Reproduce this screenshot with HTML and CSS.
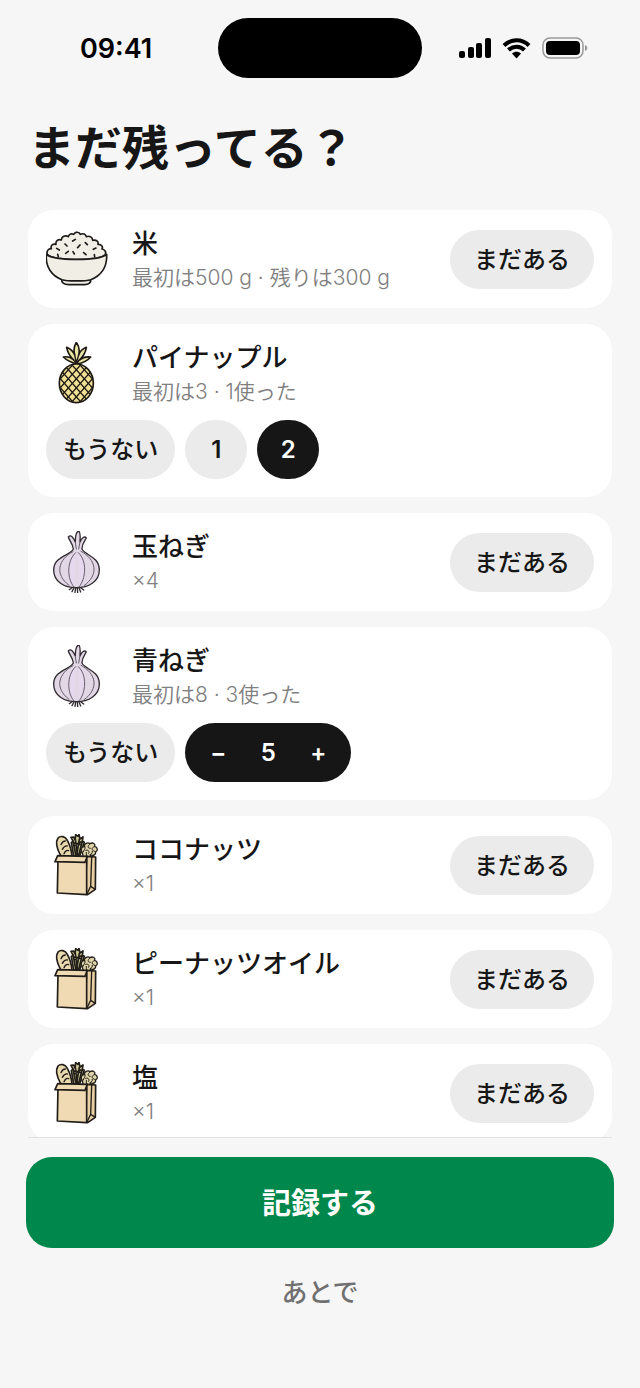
FILE: index.html
```html
<!DOCTYPE html>
<html lang="ja">
<head>
    <meta charset="UTF-8">
    <meta name="viewport" content="width=device-width, initial-scale=1.0">
    <title>まだ残ってる？</title>
    <link rel="stylesheet" href="styles.css">
</head>
<body>
    <!-- Food drawings, reused by the cards below -->
    <svg class="sprite" aria-hidden="true">
        <symbol id="rice" viewBox="30 18 186 186">
            <g stroke="#1c1b19" stroke-width="5" stroke-linecap="round" stroke-linejoin="round">
                <path fill="#f1eee5" d="M34 97C31 88 36 80 46 80C43 71 50 64 60 67C58 57 67 50 76 54C76 44 88 38 97 44C99 35 108 34 113 37C118 28 130 29 133 37C141 33 149 36 151 44C161 40 170 46 170 55C181 52 188 59 186 67C196 66 202 74 198 81C207 83 211 90 208 97C195 118 50 118 34 97Z"/>
                <path fill="#f1eee5" d="M77 170C76 182 83 188 98 188H145C159 188 166 182 164 170Z"/>
                <path fill="#f1eee5" d="M31 97C28 136 48 162 78 173C93 178 149 178 164 173C194 162 214 136 212 97C190 117 54 117 31 97Z"/>
                <path fill="none" d="M110 57l8-5M87 66l6 6M148 62l6 6M62 79l8 5M125 77l7-8M172 82l8-4M89 94l8-6M111 89l4 7M143 92l7 6M65 97l2 7M175 98l1 6"/>
            </g>
        </symbol>
        <symbol id="pineapple" viewBox="30 21 186 186">
            <clipPath id="fruit"><ellipse cx="121" cy="145" rx="51" ry="58"/></clipPath>
            <g stroke="#1d1914" stroke-width="5" stroke-linejoin="round">
                <path fill="#ece6a5" d="M121 87C105 82 91 75 82 66C94 64 105 67 113 75C101 63 94 50 92 37C104 42 112 50 116 60C112 45 114 33 121 22C129 33 132 45 128 60C132 49 141 41 151 37C149 51 142 64 130 75C140 67 151 64 164 66C154 78 140 85 121 87Z"/>
                <path fill="none" stroke-width="4" d="M113 75L121 87L130 75M116 60L121 84L128 60"/>
                <ellipse cx="121" cy="145" rx="51" ry="58" fill="#f1df94"/>
                <g clip-path="url(#fruit)" fill="none" stroke-width="4">
                    <path d="M-17 206L91 84M7 206L115 84M31 206L139 84M55 206L163 84M79 206L187 84M103 206L211 84M127 206L235 84"/>
                    <path d="M7 84L115 206M31 84L139 206M55 84L163 206M79 84L187 206M103 84L211 206M127 84L235 206M-17 84L91 206"/>
                </g>
            </g>
        </symbol>
        <symbol id="onion" viewBox="30 18 186 186">
            <g stroke="#302b31" stroke-width="4" stroke-linecap="round" stroke-linejoin="round">
                <path fill="none" d="M108 188l-8 6M114 189l-6 11M119 189l-2 13M124 189l1 14M129 189l5 12M134 188l9 7"/>
                <path fill="#e1d7e5" d="M112 72C111 57 100 47 97 36C104 28 111 35 118 51C118 35 120 20 128 18C135 23 132 38 132 51C138 38 145 32 151 39C146 48 137 57 138 72C146 91 190 94 190 135C190 170 157 188 121 188C85 188 53 170 53 135C53 94 104 91 112 72Z"/>
                <path fill="#e6d9ee" stroke="#655d6c" stroke-width="3" d="M119 83C91 108 93 163 114 186M127 83C155 108 149 163 129 186"/>
                <path fill="none" stroke="#655d6c" stroke-width="3" d="M111 80C67 103 54 147 99 181M135 79C181 103 190 150 144 182M118 52L121 72M132 51L128 72"/>
            </g>
        </symbol>
        <symbol id="bag" viewBox="31 21 186 186">
            <g stroke="#211d18" stroke-width="5" stroke-linecap="round" stroke-linejoin="round">
                <path fill="#e8d9ae" d="M75 86C64 66 59 45 67 33C75 25 89 28 95 40C102 53 108 70 109 88Z"/>
                <path fill="none" stroke-width="4" d="M76 53C79 46 84 42 89 42M80 67C84 60 89 56 95 57M85 80C88 73 94 69 99 71"/>
                <path fill="#cfc996" stroke-width="5" d="M114 87L107 47L112 42L106 31L114 30L118 38L120 23L127 28L130 22L133 36L142 30L140 43L146 46L132 87Z"/>
                <path fill="none" stroke-width="5" d="M112 43L121 87M119 37L125 83M131 37L123 84M140 43L129 85M117 55L135 45M116 48L133 52"/>
                <path fill="#ded4aa" stroke-width="4" d="M143 89L139 75C134 68 137 59 146 59C145 49 157 45 163 50C172 45 180 51 177 58C187 61 187 72 180 75C181 83 173 87 166 84L160 92Z"/>
                <path fill="none" stroke-width="3" d="M148 59C150 67 144 69 142 76M163 51C155 57 155 64 164 64M176 59C166 62 167 71 179 74M150 70C157 67 163 73 159 79M152 89V76M163 83C168 82 171 77 170 73"/>
                <path fill="#e8d0a4" d="M153 88L180 90L179 187L156 203L149 198Z"/>
                <path fill="#f0dab4" d="M67 98L65 198L153 203V98Z"/>
                <path fill="#f0dab4" d="M66 86L155 88L148 106L58 104Z"/>
                <path fill="none" stroke-width="4" d="M168 91L165 178L154 201M165 178L179 187"/>
            </g>
        </symbol>
    </svg>

    <div class="status-bar">
        <span class="time">09:41</span>
        <div class="island"></div>
        <svg class="status-icons" viewBox="0 0 130 24" aria-hidden="true">
            <rect x="1" y="15" width="6" height="7" rx="2"/>
            <rect x="10" y="11" width="6" height="11" rx="2"/>
            <rect x="18" y="7" width="6" height="15" rx="2"/>
            <rect x="27" y="2" width="6" height="20" rx="2"/>
            <g fill="none" stroke="#000" stroke-width="4">
                <path d="M46 9.500C53 2.500 64 2.500 71 9.500"/>
                <path d="M50.500 14C55 9.500 62 9.500 66.500 14"/>
            </g>
            <path d="M54 17.500C56.500 15 60.500 15 63 17.500L58.500 22.500Z"/>
            <rect x="85" y="2" width="40" height="20" rx="7" fill="none" stroke="#999" stroke-width="1.500"/>
            <rect x="88" y="5" width="34" height="14" rx="4"/>
            <path fill="#999" d="M127 9C130 10 130 14 127 15Z"/>
        </svg>
    </div>

    <h1>まだ残ってる？</h1>

    <main class="list">
        <div class="card">
            <svg class="icon" aria-hidden="true"><use href="#rice"/></svg>
            <div class="info">
                <h2>米</h2>
                <p>最初は500 g · 残りは300 g</p>
            </div>
            <button class="pill">まだある</button>
        </div>

        <div class="card">
            <svg class="icon" aria-hidden="true"><use href="#pineapple"/></svg>
            <div class="info">
                <h2>パイナップル</h2>
                <p>最初は3 · 1使った</p>
            </div>
            <div class="choices">
                <button class="pill none">もうない</button>
                <button class="pill count">1</button>
                <button class="pill count selected">2</button>
            </div>
        </div>

        <div class="card">
            <svg class="icon" aria-hidden="true"><use href="#onion"/></svg>
            <div class="info">
                <h2>玉ねぎ</h2>
                <p>×4</p>
            </div>
            <button class="pill">まだある</button>
        </div>

        <div class="card">
            <svg class="icon" aria-hidden="true"><use href="#onion"/></svg>
            <div class="info">
                <h2>青ねぎ</h2>
                <p>最初は8 · 3使った</p>
            </div>
            <div class="choices">
                <button class="pill none">もうない</button>
                <div class="stepper">
                    <button id="minusBtn">−</button>
                    <output id="amount">5</output>
                    <button id="plusBtn">+</button>
                </div>
            </div>
        </div>

        <div class="card">
            <svg class="icon" aria-hidden="true"><use href="#bag"/></svg>
            <div class="info">
                <h2>ココナッツ</h2>
                <p>×1</p>
            </div>
            <button class="pill">まだある</button>
        </div>

        <div class="card">
            <svg class="icon" aria-hidden="true"><use href="#bag"/></svg>
            <div class="info">
                <h2>ピーナッツオイル</h2>
                <p>×1</p>
            </div>
            <button class="pill">まだある</button>
        </div>

        <div class="card">
            <svg class="icon" aria-hidden="true"><use href="#bag"/></svg>
            <div class="info">
                <h2>塩</h2>
                <p>×1</p>
            </div>
            <button class="pill">まだある</button>
        </div>
    </main>

    <footer>
        <button class="save">記録する</button>
        <button class="later">あとで</button>
    </footer>

    <script>
        // Stepper for the remaining amount
        const amount = document.getElementById('amount');

        document.getElementById('minusBtn').addEventListener('click', function() {
            amount.textContent = Math.max(1, Number(amount.textContent) - 1);
        });

        document.getElementById('plusBtn').addEventListener('click', function() {
            amount.textContent = Math.min(8, Number(amount.textContent) + 1);
        });
    </script>
</body>
</html>
```
FILE: styles.css
```css
* {
    box-sizing: border-box;
}

body {
    display: flex;
    flex-direction: column;
    height: 100vh;
    margin: 0;
    background-color: #f6f6f6;
    color: #161616;
    font-family: Inter, "Noto Sans CJK JP", sans-serif;
}

h1, h2, p {
    margin: 0;
}

button {
    padding: 0;
    border: none;
    background: none;
    color: inherit;
    font-family: inherit;
    cursor: pointer;
}

.sprite {
    position: absolute;
    width: 0;
    height: 0;
}

/* Status bar */
.status-bar {
    display: grid;
    grid-template-columns: 1fr 204px 1fr;
    align-items: center;
    flex-shrink: 0;
    height: 96px;
}

.time {
    padding-left: 80px;
    color: #000;
    font-size: 27px;
    font-weight: 600;
}

.island {
    height: 60px;
    border-radius: 30px;
    background-color: #000;
}

.status-icons {
    justify-self: end;
    width: 130px;
    height: 24px;
    margin-right: 52px;
}

h1 {
    flex-shrink: 0;
    padding: 14px 28px 30px;
    font-family: "Noto Sans CJK JP", sans-serif;
    font-size: 47px;
    font-weight: 700;
    line-height: 70px;
}

/* Food list */
.list {
    display: flex;
    flex: 1;
    flex-direction: column;
    gap: 16px;
    min-height: 0;
    margin: 0 28px;
    overflow-y: auto;
    scrollbar-width: none;
}

.card {
    display: flex;
    flex-wrap: wrap;
    flex-shrink: 0;
    align-items: center;
    row-gap: 16px;
    padding: 18px;
    border-radius: 26px;
    background-color: #fff;
}

.icon {
    width: 62px;
    height: 62px;
    margin-right: 24px;
}

.info {
    flex: 1;
}

.info h2 {
    font-size: 26px;
    font-weight: 500;
    line-height: 32px;
}

.info p {
    margin-top: 6px;
    color: #808080;
    font-size: 21px;
    font-weight: 350;
    line-height: 24px;
}

.pill {
    height: 59px;
    padding: 0 24px 4px;
    border-radius: 30px;
    background-color: #ebebeb;
    font-size: 24px;
    font-weight: 500;
}

.choices {
    display: flex;
    gap: 10px;
    width: 100%;
}

.none {
    padding: 0 17px 4px;
}

.count {
    width: 62px;
    padding: 0;
    font-weight: 600;
}

.selected {
    background-color: #161616;
    color: #fff;
}

.stepper {
    display: flex;
    align-items: center;
    height: 59px;
    padding: 0 8px;
    border-radius: 30px;
    background-color: #161616;
    color: #fff;
    text-align: center;
}

.stepper button,
.stepper output {
    width: 50px;
    font-size: 24px;
    font-weight: 600;
    line-height: 59px;
}

/* Bottom actions */
footer {
    display: flex;
    flex-direction: column;
    flex-shrink: 0;
    gap: 19px;
    margin: 0 26px;
    padding-bottom: 70px;
}

footer::before {
    content: "";
    height: 1px;
    margin: 0 2px;
    background-color: #e2e2e2;
}

.save {
    height: 91px;
    padding-bottom: 4px;
    border-radius: 26px;
    background-color: #00874b;
    color: #fff;
    font-size: 29px;
    font-weight: 700;
}

.later {
    height: 51px;
    padding-bottom: 4px;
    color: #707070;
    font-size: 26px;
    font-weight: 500;
}
```
